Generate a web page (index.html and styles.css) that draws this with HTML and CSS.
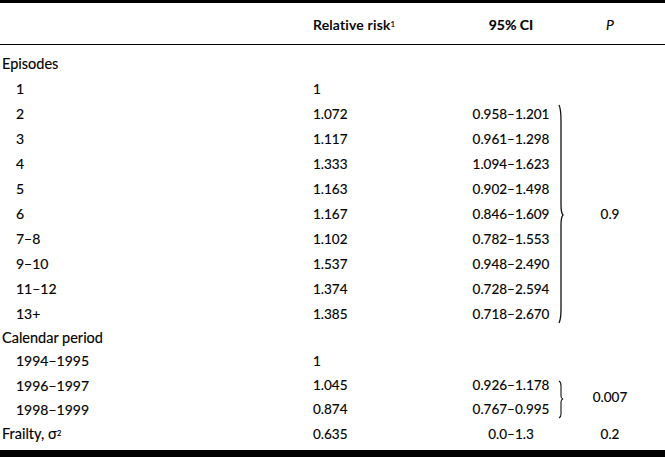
FILE: index.html
```html
<!DOCTYPE html>
<html>
<head>
<meta charset="utf-8">
<link rel="stylesheet" href="styles.css">
</head>
<body>
<div class="table">
  <div class="grid">
    <div class="rr head">Relative risk<sup>1</sup></div>
    <div class="ci head strong">95% CI</div>
    <div class="p head"><i>P</i></div>
    <div class="rule"></div>
    <div class="gap"></div>

    <div class="brace b1"><svg width="14" height="225" viewBox="0 0 14 225"><path d="M6 4 Q8 8 8 20 L8 104 Q8 112 10 114 Q8 116 8 124 L8 208 Q8 218 6 222" fill="none" stroke="#111" stroke-width="1.3"/></svg></div>
    <div class="p pspan1">0.9</div>
    <div class="brace b2"><svg width="14" height="48" viewBox="0 0 14 48"><path d="M6 8 Q8 9 8 13 L8 23 Q8 25.5 10 26 Q8 26.5 8 29 L8 41 Q8 44 6 45" fill="none" stroke="#111" stroke-width="1.1"/></svg></div>
    <div class="p pspan2">0.007</div>

    <div class="lab">Episodes</div>
    <div class="lab ind">1</div><div class="rr">1</div>
    <div class="lab ind">2</div><div class="rr">1.072</div><div class="ci">0.958–1.201</div>
    <div class="lab ind">3</div><div class="rr">1.117</div><div class="ci">0.961–1.298</div>
    <div class="lab ind">4</div><div class="rr">1.333</div><div class="ci">1.094–1.623</div>
    <div class="lab ind">5</div><div class="rr">1.163</div><div class="ci">0.902–1.498</div>
    <div class="lab ind">6</div><div class="rr">1.167</div><div class="ci">0.846–1.609</div>
    <div class="lab ind">7–8</div><div class="rr">1.102</div><div class="ci">0.782–1.553</div>
    <div class="lab ind">9–10</div><div class="rr">1.537</div><div class="ci">0.948–2.490</div>
    <div class="lab ind">11–12</div><div class="rr">1.374</div><div class="ci">0.728–2.594</div>
    <div class="lab ind">13+</div><div class="rr">1.385</div><div class="ci">0.718–2.670</div>
    <div class="lab">Calendar period</div>
    <div class="lab ind">1994–1995</div><div class="rr">1</div>
    <div class="lab ind">1996–1997</div><div class="rr">1.045</div><div class="ci">0.926–1.178</div>
    <div class="lab ind">1998–1999</div><div class="rr">0.874</div><div class="ci">0.767–0.995</div>
    <div class="lab">Frailty, σ<sup>2</sup></div><div class="rr">0.635</div><div class="ci">0.0–1.3</div><div class="p">0.2</div>
    <div class="gap"></div>
  </div>
</div>
</body>
</html>
```

FILE: styles.css
```css
html, body {
  margin: 0;
  padding: 0;
  background: #fff;
}

.table {
  width: 665px;
  border-top: 3px solid #000;
  border-bottom: 7px solid #000;
  font-family: "Lato", "Open Sans", sans-serif;
  font-size: 13.5px;
  color: #000;
  -webkit-text-stroke: 0.15px #000;
}

.grid {
  display: grid;
  grid-template-columns: 313px 149px 91px 14px 86px 12px;
  grid-template-rows: 41px 1px 6px repeat(11, 25px) 22px 25px 24px 24px 25px 4px;
}

.grid > div {
  display: flex;
  align-items: center;
  white-space: nowrap;
}

.lab {
  grid-column: 1;
  padding-left: 2px;
  font-size: 14.5px;
}

.lab.ind {
  padding-left: 16px;
  font-size: 14px;
}

.rr {
  grid-column: 2;
}

.ci {
  grid-column: 3;
  justify-content: center;
  padding-left: 7px;
}

.p {
  grid-column: 5;
  justify-content: center;
}

.head {
  padding-top: 2px;
  font-size: 14px;
}

.rr.head {
  font-weight: 600;
  letter-spacing: 0.2px;
}

.strong {
  font-weight: 700;
}

.rule {
  grid-column: 1 / -1;
  background: #000;
}

.gap {
  grid-column: 1 / -1;
}

.brace {
  grid-column: 4;
}

.b1 {
  grid-row: 6 / span 9;
}

.pspan1 {
  grid-row: 6 / span 9;
}

.b2 {
  grid-row: 17 / span 2;
}

.pspan2 {
  grid-row: 17 / span 2;
}

sup {
  font-size: 8px;
  line-height: 0;
  position: relative;
  top: -1px;
  vertical-align: super;
  font-weight: 400;
}
```
